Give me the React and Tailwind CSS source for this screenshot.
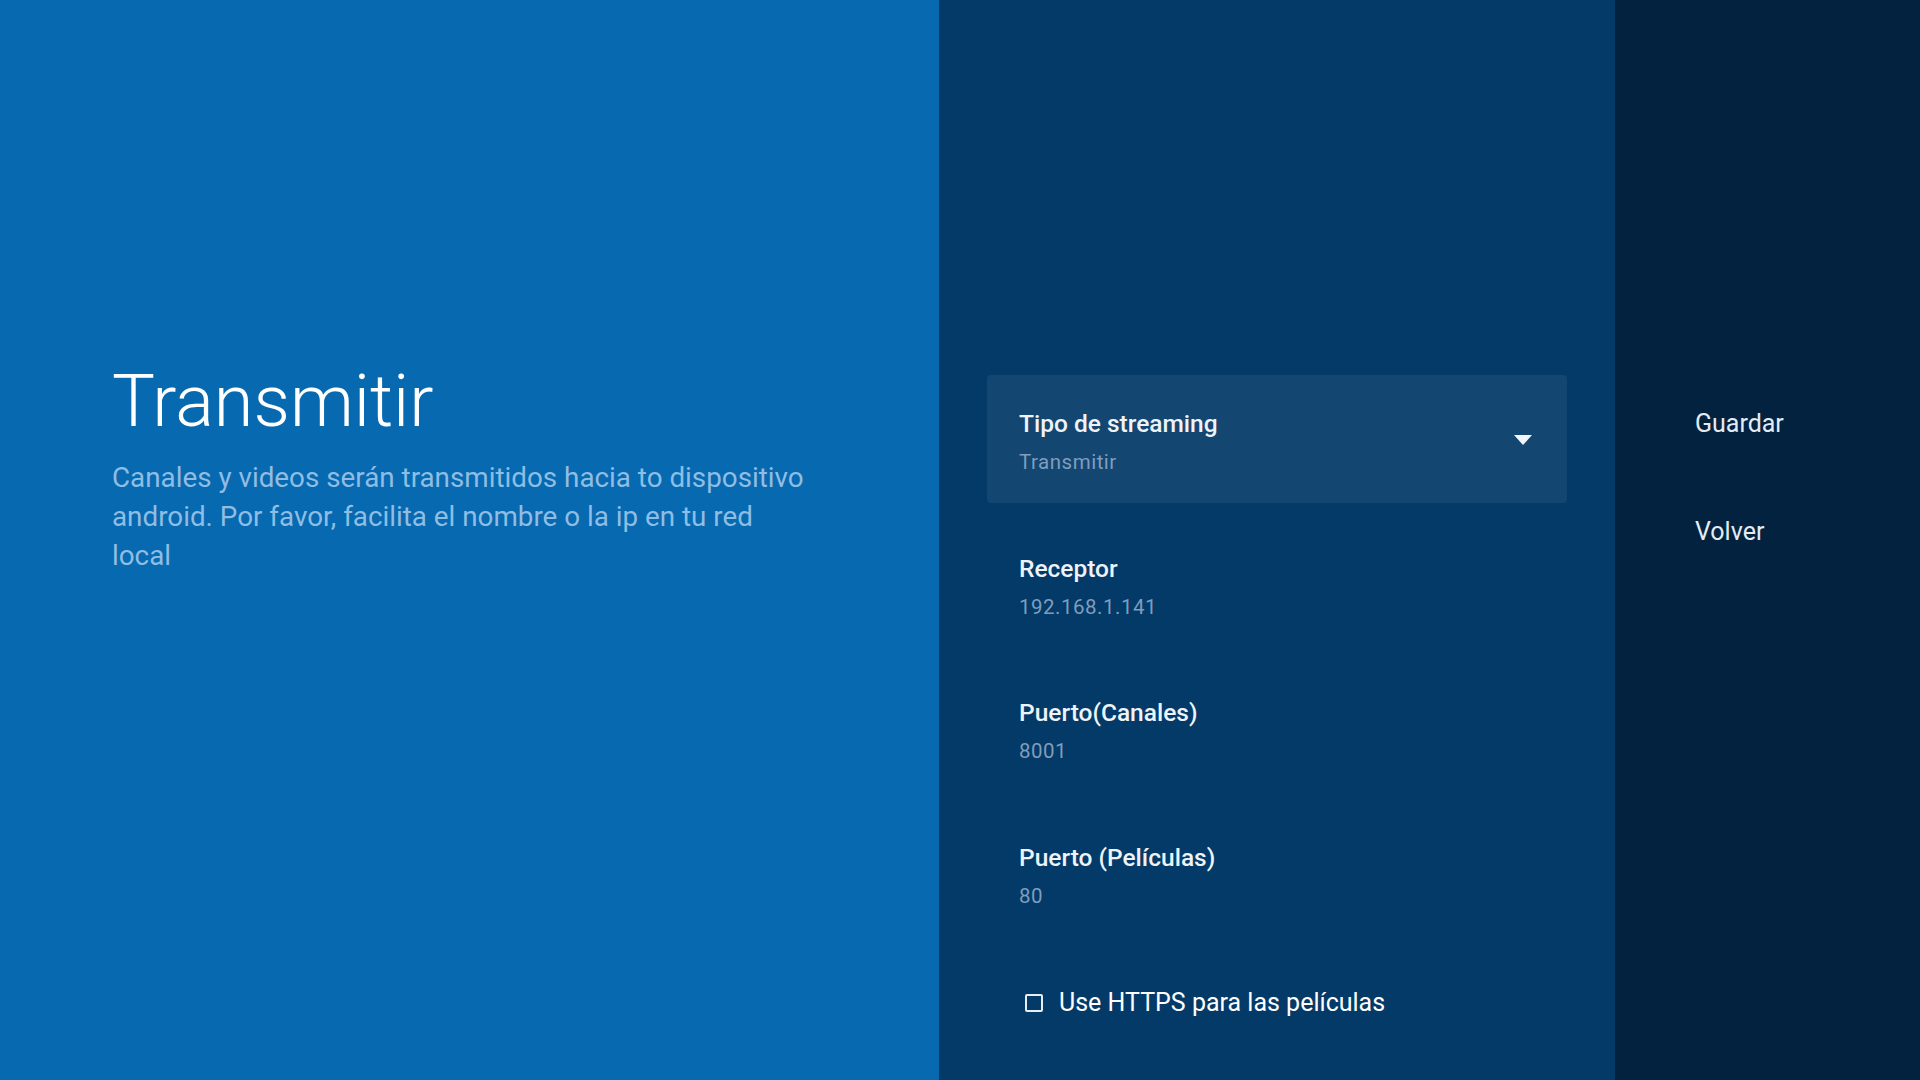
const fields = [
  { label: 'Receptor', value: '192.168.1.141' },
  { label: 'Puerto(Canales)', value: '8001' },
  { label: 'Puerto (Películas)', value: '80' },
];

const Field = ({ label, value, children, boxed }) => (
  <div
    className={
      'h-[128px] px-8 pt-[33px] flex items-start justify-between rounded ' +
      (boxed ? 'bg-[#134670]' : '')
    }
  >
    <div className="flex flex-col">
      <span className="text-[24.5px] leading-8 font-medium text-[#eef3f8]">{label}</span>
      <span className="mt-2 text-[20.5px] leading-7 text-[#7f9dbd] tracking-wide">{value}</span>
    </div>
    {children}
  </div>
);

export default function App() {
  return (
    <div
      className="flex h-screen w-full overflow-hidden"
      style={{ fontFamily: 'Roboto, "Noto Sans", sans-serif' }}
    >
      {/* Left: title and explanation */}
      <div className="w-[939px] shrink-0 bg-[#0769b0] pl-[112px] pt-[366px]">
        <h1 className="text-[72px] leading-none font-light text-white">Transmitir</h1>
        <p className="mt-5 w-[704px] text-[27.8px] leading-[39px] text-[#8fbde3]">
          Canales y videos serán transmitidos hacia to dispositivo android. Por favor, facilita el
          nombre o la ip en tu red local
        </p>
      </div>

      {/* Middle: settings list */}
      <div className="w-[676px] shrink-0 bg-[#033a68] px-12 pt-[375px]">
        <Field label="Tipo de streaming" value="Transmitir" boxed>
          <svg width="20" height="12" viewBox="0 0 20 12" className="mt-[26px] mr-[2px]">
            <path d="M1 1h18L10 11z" fill="#f2f6fa" />
          </svg>
        </Field>
        {fields.map((f) => (
          <div key={f.label} className="mt-[16.5px]">
            <Field label={f.label} value={f.value} />
          </div>
        ))}
        <div className="mt-[48px] h-9 flex items-center pl-[38px] gap-[16px]">
          <span className="w-[18px] h-[18px] border-2 border-[#e6edf4] rounded-[2px]" />
          <span className="text-[25px] text-white">Use HTTPS para las películas</span>
        </div>
      </div>

      {/* Right: actions */}
      <div className="flex-1 bg-[#02223f] pl-[80px] pt-[408px] flex flex-col">
        <span className="text-[25px] leading-8 text-[#e4ecf3]">Guardar</span>
        <span className="mt-[76px] text-[25px] leading-8 text-[#e4ecf3]">Volver</span>
      </div>
    </div>
  );
}
